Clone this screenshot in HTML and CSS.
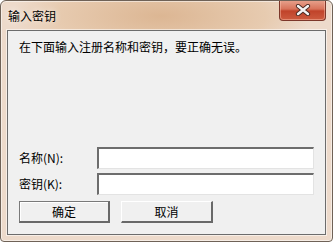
FILE: index.html
```html
<!DOCTYPE html>
<html lang="zh-CN">

<head>
    <meta charset="UTF-8">
    <title>输入密钥</title>
    <link rel="stylesheet" href="styles.css">
</head>

<body>
    <div class="win">
        <div class="titlebar">
            <span class="title">输入密钥</span>
            <div class="close">
                <svg width="18" height="12" viewBox="0 0 18 12">
                    <path d="M4 2 L14 10 M14 2 L4 10" stroke="#4a2a22" stroke-width="4.2" stroke-linecap="round" />
                    <path d="M4 2 L14 10 M14 2 L4 10" stroke="#f4f4f4" stroke-width="2.4" stroke-linecap="round" />
                </svg>
            </div>
        </div>
        <div class="client">
            <p class="msg">在下面输入注册名称和密钥，要正确无误。</p>
            <div class="row">
                <label class="lbl">名称(N):</label>
                <div class="edit"></div>
            </div>
            <div class="row">
                <label class="lbl">密钥(K):</label>
                <div class="edit"></div>
            </div>
            <div class="btns">
                <div class="btn def">确定</div>
                <div class="btn">取消</div>
            </div>
        </div>
    </div>
</body>

</html>
```

FILE: styles.css
```css
* {
    margin: 0;
    padding: 0;
    box-sizing: border-box;
}

body {
    width: 333px;
    height: 242px;
    background: #fff;
    font-family: "Noto Sans CJK SC", "Liberation Sans", sans-serif;
    font-size: 12px;
    color: #000;
}

.win {
    display: flex;
    flex-direction: column;
    width: 333px;
    height: 242px;
    border: 1px solid #6f6257;
    border-radius: 6px 6px 4px 4px;
    background: radial-gradient(ellipse 150px 45px at 160px 15px, #dcb693, #e7cbb0 70%, #eddacb);
    box-shadow: inset 0 0 0 1px rgba(255, 255, 255, 0.5);
    overflow: hidden;
}

.titlebar {
    position: relative;
    height: 29px;
    padding: 6px 0 0 7px;
}

.title {
    font-size: 12px;
    line-height: 16px;
    color: #000;
    text-shadow: 0 0 6px rgba(255, 255, 255, 0.9);
}

.close {
    position: absolute;
    top: -1px;
    right: 6px;
    width: 47px;
    height: 21px;
    display: flex;
    align-items: center;
    justify-content: center;
    border: 1px solid #7c372a;
    border-top: none;
    border-radius: 0 0 4px 4px;
    background: linear-gradient(#e8a48f, #d8735a 45%, #c0432a 55%, #cd5b3f);
    box-shadow: inset 0 0 0 1px rgba(255, 200, 180, 0.45);
}

.client {
    flex: 1;
    display: flex;
    flex-direction: column;
    margin: 0 6px 6px 6px;
    padding: 8px 11px 11px 11px;
    background: #f0f0f0;
    border: 1px solid #6c6c6c;
    box-shadow: 0 0 0 1px rgba(255, 255, 255, 0.55);
}

.msg {
    flex: 1;
    line-height: 16px;
}

.row {
    display: flex;
    align-items: center;
    height: 22px;
    margin-bottom: 4px;
}

.lbl {
    width: 78px;
    line-height: 14px;
}

.edit {
    width: 217px;
    height: 22px;
    background: #fff;
    border-style: solid;
    border-width: 2px 1px 1px 2px;
    border-color: #6d6d6d #e3e3e3 #e3e3e3 #6d6d6d;
}

.btns {
    display: flex;
    gap: 11px;
    margin-top: 2px;
}

.btn {
    width: 92px;
    height: 22px;
    line-height: 19px;
    text-align: center;
    font-size: 12px;
    background: #f0f0f0;
    border-style: solid;
    border-width: 1px 2px 2px 1px;
    border-color: #fff #696969 #696969 #fff;
}

.btn.def {
    width: 91px;
    border-color: #7a7a7a #696969 #696969 #7a7a7a;
    box-shadow: inset 1px 1px 0 #fff;
}
```
